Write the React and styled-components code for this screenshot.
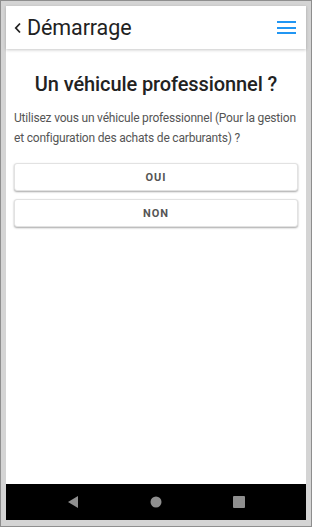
import React from "react";
import styled, { createGlobalStyle } from "styled-components";

const GlobalStyle = createGlobalStyle`
  html, body {
    margin: 0;
    padding: 0;
    background: #d4d4d4;
  }
  * {
    box-sizing: border-box;
  }
`;

const Frame = styled.div`
  width: 312px;
  height: 527px;
  border: 1px solid #8e8e8e;
  padding: 5px 5px 6px 5px;
  background: #d4d4d4;
  font-family: Roboto, "Liberation Sans", sans-serif;
`;

const Screen = styled.div`
  height: 100%;
  display: flex;
  flex-direction: column;
  background: #fff;
`;

const Header = styled.header`
  height: 43px;
  flex-shrink: 0;
  display: flex;
  align-items: center;
  padding: 0 10px 0 8px;
  box-shadow: 0 1px 3px rgba(0, 0, 0, 0.22);
  position: relative;
  z-index: 1;
`;

const Back = styled.div`
  display: flex;
  align-items: center;
  gap: 5px;
  color: #222;
  cursor: pointer;
`;

const HeaderTitle = styled.h1`
  margin: 0;
  font-size: 21.5px;
  font-weight: 400;
  color: #222;
  letter-spacing: -0.1px;
`;

const Menu = styled.button`
  margin-left: auto;
  background: none;
  border: none;
  padding: 0;
  display: flex;
  flex-direction: column;
  gap: 3.5px;
  cursor: pointer;
`;

const MenuLine = styled.span`
  display: block;
  width: 19px;
  height: 2px;
  background: #2196f3;
`;

const Content = styled.main`
  flex: 1;
  padding: 23px 8px 0;
`;

const Title = styled.h2`
  margin: 0 0 12px;
  text-align: center;
  font-size: 20px;
  font-weight: 500;
  color: #222;
  letter-spacing: -0.1px;
`;

const Text = styled.p`
  margin: 0 0 15px;
  font-size: 12px;
  line-height: 20px;
  letter-spacing: -0.2px;
  color: #555;
`;

const Choices = styled.div`
  display: flex;
  flex-direction: column;
  gap: 8px;
`;

const Choice = styled.button`
  height: 28px;
  width: 100%;
  background: #fff;
  border: 1px solid #e2e2e2;
  border-radius: 3px;
  box-shadow: 0 1px 2px rgba(0, 0, 0, 0.35);
  font-family: inherit;
  font-size: 11px;
  font-weight: 700;
  letter-spacing: 1px;
  color: #555;
  cursor: pointer;
`;

const NavBar = styled.nav`
  height: 36px;
  flex-shrink: 0;
  background: #000;
  display: flex;
  align-items: center;
  justify-content: center;
  gap: 71px;
`;

const NavIcon = styled.svg`
  width: 12px;
  height: 12px;
  fill: #8f8f8f;
`;

export default function App() {
  return (
    <>
      <GlobalStyle />
      <Frame>
        <Screen>
          <Header>
            <Back>
              <svg width="8" height="12" viewBox="0 0 8 12">
                <path d="M6 1.5 L1.8 6 L6 10.5" fill="none" stroke="#222" strokeWidth="1.8" />
              </svg>
              <HeaderTitle>Démarrage</HeaderTitle>
            </Back>
            <Menu aria-label="menu">
              <MenuLine />
              <MenuLine />
              <MenuLine />
            </Menu>
          </Header>
          <Content>
            <Title>Un véhicule professionnel ?</Title>
            <Text>
              Utilisez vous un véhicule professionnel (Pour la gestion et
              configuration des achats de carburants) ?
            </Text>
            <Choices>
              <Choice>OUI</Choice>
              <Choice>NON</Choice>
            </Choices>
          </Content>
          <NavBar>
            <NavIcon viewBox="0 0 12 12">
              <path d="M11 0 L11 12 L1 6 Z" />
            </NavIcon>
            <NavIcon viewBox="0 0 12 12">
              <circle cx="6" cy="6" r="5.5" />
            </NavIcon>
            <NavIcon viewBox="0 0 12 12">
              <rect x="0" y="0" width="12" height="12" rx="1" />
            </NavIcon>
          </NavBar>
        </Screen>
      </Frame>
    </>
  );
}
